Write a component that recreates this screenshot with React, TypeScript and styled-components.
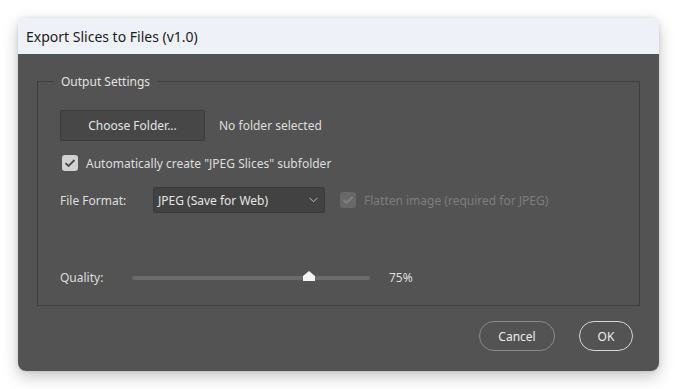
import React, { useState } from 'react';
import styled, { createGlobalStyle } from 'styled-components';

const GlobalStyle = createGlobalStyle`
  html, body {
    margin: 0;
    padding: 0;
    background: #ffffff;
  }
  body {
    font-family: "Noto Sans", "Open Sans", sans-serif;
  }
`;

const Page = styled.div`
  width: 677px;
  height: 389px;
  padding: 18px 0 0 18px;
  box-sizing: border-box;
`;

const Window = styled.div`
  width: 641px;
  height: 353px;
  border-radius: 8px;
  overflow: hidden;
  display: flex;
  flex-direction: column;
  box-shadow: 0 6px 16px rgba(0, 0, 0, 0.22), 0 0 4px rgba(0, 0, 0, 0.12);
`;

const TitleBar = styled.div`
  height: 36px;
  flex-shrink: 0;
  background: #eef2f8;
  display: flex;
  align-items: center;
  padding-left: 8px;
  font-size: 14px;
  color: #1b1b1b;
`;

const Body = styled.div`
  flex: 1;
  background: #535353;
  padding: 19px 19px 0 19px;
  display: flex;
  flex-direction: column;
`;

const Group = styled.fieldset`
  margin: 0;
  border: 1px solid #3e3e3e;
  padding: 20px 22px 18px 22px;
  height: 233px;
  box-sizing: border-box;
  display: flex;
  flex-direction: column;
  min-width: 0;
`;

const Legend = styled.legend`
  margin-left: -6px;
  padding: 0 7px;
  font-size: 12px;
  color: #e2e2e2;
`;

const Row = styled.div<{ $gap?: number; $top?: number }>`
  display: flex;
  align-items: center;
  gap: ${p => p.$gap ?? 14}px;
  margin-top: ${p => p.$top ?? 0}px;
`;

const FolderButton = styled.button`
  width: 145px;
  height: 31px;
  background: #474747;
  border: 1px solid #3b3b3b;
  border-radius: 2px;
  color: #e4e4e4;
  font-family: inherit;
  font-size: 12px;
  padding: 0;
`;

const Text = styled.span<{ $dim?: boolean }>`
  font-size: 12px;
  color: ${p => (p.$dim ? '#7d7d7d' : '#dedede')};
  white-space: nowrap;
`;

const Label = styled(Text)<{ $width?: number }>`
  width: ${p => p.$width ?? 93}px;
`;

const Box = styled.span<{ $dim?: boolean }>`
  width: 16px;
  height: 16px;
  border-radius: 3px;
  background: ${p => (p.$dim ? '#686868' : '#d2d2d2')};
  display: inline-flex;
  align-items: center;
  justify-content: center;
  flex-shrink: 0;
`;

const CheckLine = styled.label<{ $left?: number }>`
  display: flex;
  align-items: center;
  gap: 8px;
  padding-left: 2px;
  margin-left: ${p => p.$left ?? 0}px;
  height: 20px;
`;

const Select = styled.div`
  width: 172px;
  height: 26px;
  box-sizing: border-box;
  background: #424242;
  border: 1px solid #3a3a3a;
  border-radius: 2px;
  display: flex;
  align-items: center;
  justify-content: space-between;
  padding: 0 6px 0 4px;
  font-size: 12px;
  color: #e6e6e6;
`;

const Track = styled.div`
  position: relative;
  width: 238px;
  height: 4px;
  background: #6b6b6b;
  border-radius: 2px;
`;

const Thumb = styled.svg`
  position: absolute;
  top: -5px;
  transform: translateX(-8px);
`;

const Percent = styled(Text)`
  margin-left: 19px;
`;

const Footer = styled.div`
  flex: 1;
  display: flex;
  justify-content: flex-end;
  align-items: flex-start;
  gap: 24px;
  padding: 15px 7px 0 0;
`;

const Pill = styled.button<{ $primary?: boolean }>`
  height: 30px;
  min-width: ${p => (p.$primary ? 54 : 76)}px;
  border-radius: 15px;
  background: transparent;
  border: ${p => (p.$primary ? '1.5px solid #d6d6d6' : '1px solid #8a8a8a')};
  color: #ececec;
  font-family: inherit;
  font-size: 12px;
  padding: 0 14px;
`;

const Check = ({ color }: { color: string }) => (
  <svg width="12" height="10" viewBox="0 0 12 10">
    <polyline points="1.5,5.2 4.5,8 10.5,2" fill="none" stroke={color} strokeWidth="1.8" />
  </svg>
);

export default function App() {
  const [quality] = useState(75);

  return (
    <>
      <GlobalStyle />
      <Page>
        <Window>
          <TitleBar>Export Slices to Files (v1.0)</TitleBar>
          <Body>
            <Group>
              <Legend>Output Settings</Legend>
              <Row>
                <FolderButton>Choose Folder...</FolderButton>
                <Text>No folder selected</Text>
              </Row>
              <Row $top={12}>
                <CheckLine>
                  <Box><Check color="#4a4a4a" /></Box>
                  <Text>Automatically create "JPEG Slices" subfolder</Text>
                </CheckLine>
              </Row>
              <Row $top={14} $gap={0}>
                <Label>File Format:</Label>
                <Select>
                  <span>JPEG (Save for Web)</span>
                  <svg width="9" height="6" viewBox="0 0 9 6">
                    <polyline points="0.5,0.8 4.5,4.8 8.5,0.8" fill="none" stroke="#bdbdbd" strokeWidth="1" />
                  </svg>
                </Select>
                <CheckLine $left={13}>
                  <Box $dim><Check color="#808080" /></Box>
                  <Text $dim>Flatten image (required for JPEG)</Text>
                </CheckLine>
              </Row>
              <Row $top={56} $gap={0}>
                <Label $width={72}>Quality:</Label>
                <Track>
                  <Thumb width="12" height="10" viewBox="0 0 12 10" style={{ left: `${quality}%` }}>
                    <polygon points="6,0 12,5 12,10 0,10 0,5" fill="#f4f4f4" />
                  </Thumb>
                </Track>
                <Percent>{quality}%</Percent>
              </Row>
            </Group>
            <Footer>
              <Pill>Cancel</Pill>
              <Pill $primary>OK</Pill>
            </Footer>
          </Body>
        </Window>
      </Page>
    </>
  );
}
